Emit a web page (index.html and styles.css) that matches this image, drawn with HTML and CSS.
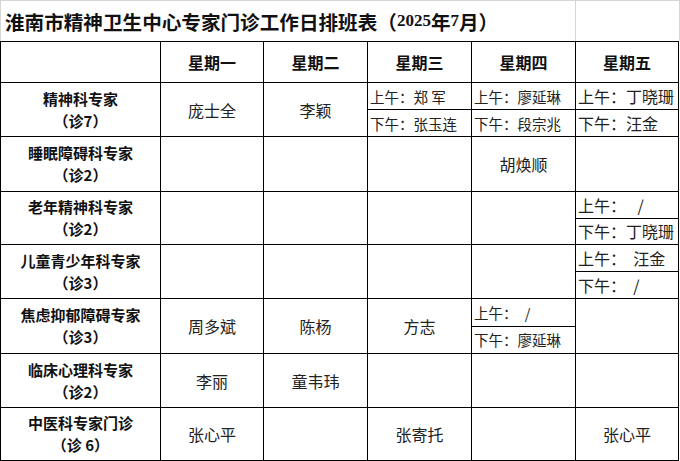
FILE: index.html
```html
<!DOCTYPE html>
<html lang="zh-CN">
<head>
<meta charset="utf-8">
<title>淮南市精神卫生中心专家门诊工作日排班表</title>
<link rel="stylesheet" href="styles.css">
</head>
<body>
<div class="sheet">
  <div class="title-row">
    <div class="title-cell title">淮南市精神卫生中心专家门诊工作日排班表（<span class="num">2025</span>年<span class="num">7</span>月）</div>
    <div class="title-cell"></div>
  </div>
  <div class="grid">
    <div class="cell"></div>
    <div class="cell head">星期一</div>
    <div class="cell head">星期二</div>
    <div class="cell head">星期三</div>
    <div class="cell head">星期四</div>
    <div class="cell head">星期五</div>

    <div class="cell label">精神科专家<br>（诊7）</div>
    <div class="cell name">庞士全</div>
    <div class="cell name">李颖</div>
    <div class="cell split"><div class="half">上午：郑 军</div><div class="half">下午：张玉连</div></div>
    <div class="cell split"><div class="half">上午：廖延琳</div><div class="half">下午：段宗兆</div></div>
    <div class="cell split wide"><div class="half">上午：丁晓珊</div><div class="half">下午：汪金</div></div>

    <div class="cell label">睡眠障碍科专家<br>（诊2）</div>
    <div class="cell name"></div>
    <div class="cell name"></div>
    <div class="cell name"></div>
    <div class="cell name">胡焕顺</div>
    <div class="cell name"></div>

    <div class="cell label">老年精神科专家<br>（诊2）</div>
    <div class="cell name"></div>
    <div class="cell name"></div>
    <div class="cell name"></div>
    <div class="cell name"></div>
    <div class="cell split wide"><div class="half">上午：　 /</div><div class="half">下午：丁晓珊</div></div>

    <div class="cell label">儿童青少年科专家<br>（诊3）</div>
    <div class="cell name"></div>
    <div class="cell name"></div>
    <div class="cell name"></div>
    <div class="cell name"></div>
    <div class="cell split wide"><div class="half">上午：  汪金</div><div class="half">下午：  /</div></div>

    <div class="cell label">焦虑抑郁障碍专家<br>（诊3）</div>
    <div class="cell name">周多斌</div>
    <div class="cell name">陈杨</div>
    <div class="cell name">方志</div>
    <div class="cell split"><div class="half">上午：　/</div><div class="half">下午：廖延琳</div></div>
    <div class="cell name"></div>

    <div class="cell label">临床心理科专家<br>（诊2）</div>
    <div class="cell name">李丽</div>
    <div class="cell name">童韦玮</div>
    <div class="cell name"></div>
    <div class="cell name"></div>
    <div class="cell name"></div>

    <div class="cell label">中医科专家门诊<br>（诊 6）</div>
    <div class="cell name">张心平</div>
    <div class="cell name"></div>
    <div class="cell name">张寄托</div>
    <div class="cell name"></div>
    <div class="cell name">张心平</div>
  </div>
</div>
</body>
</html>
```
FILE: styles.css
```css
html, body {
  margin: 0;
  padding: 0;
  background: #ffffff;
}

body {
  font-family: "Noto Sans CJK SC", "Noto Sans", sans-serif;
  color: #000;
}

.sheet {
  width: 680px;
}

.title-row {
  display: grid;
  grid-template-columns: 575px 104px;
  height: 41px;
  box-sizing: border-box;
  border-top: 1px solid #d6d6d6;
  border-left: 1px solid #d6d6d6;
}

.title-cell {
  border-right: 1px solid #d6d6d6;
  box-sizing: border-box;
}

.title {
  display: flex;
  align-items: center;
  padding-left: 4px;
  font-size: 19.6px;
  font-weight: 700;
  letter-spacing: 0;
  white-space: nowrap;
  color: #111;
}

.title .num {
  font-family: "Liberation Serif", serif;
  font-weight: 700;
  font-size: 17px;
}

.grid {
  display: grid;
  width: 679px;
  box-sizing: border-box;
  grid-template-columns: 160px 103px 104px 104px 104px 103px;
  grid-template-rows: 41px 54px 55px 53px 54px 55px 54px 53px;
  border-left: 1px solid #000;
  border-top: 1px solid #000;
}

.cell {
  box-sizing: border-box;
  border-right: 1px solid #000;
  border-bottom: 1px solid #000;
  display: flex;
  align-items: center;
  justify-content: center;
  text-align: center;
  min-width: 0;
}

.head {
  font-size: 16px;
  font-weight: 700;
  color: #111;
}

.label {
  font-size: 15px;
  font-weight: 700;
  line-height: 22px;
  color: #111;
}

.name {
  font-size: 16px;
  color: #222;
}

.split {
  flex-direction: column;
  align-items: stretch;
  justify-content: stretch;
}

.half {
  flex: 1;
  display: flex;
  align-items: center;
  padding-left: 2px;
  font-size: 14.5px;
  color: #222;
  white-space: pre;
}

.half + .half {
  border-top: 1px solid #000;
}

.wide .half {
  font-size: 16px;
}
```
